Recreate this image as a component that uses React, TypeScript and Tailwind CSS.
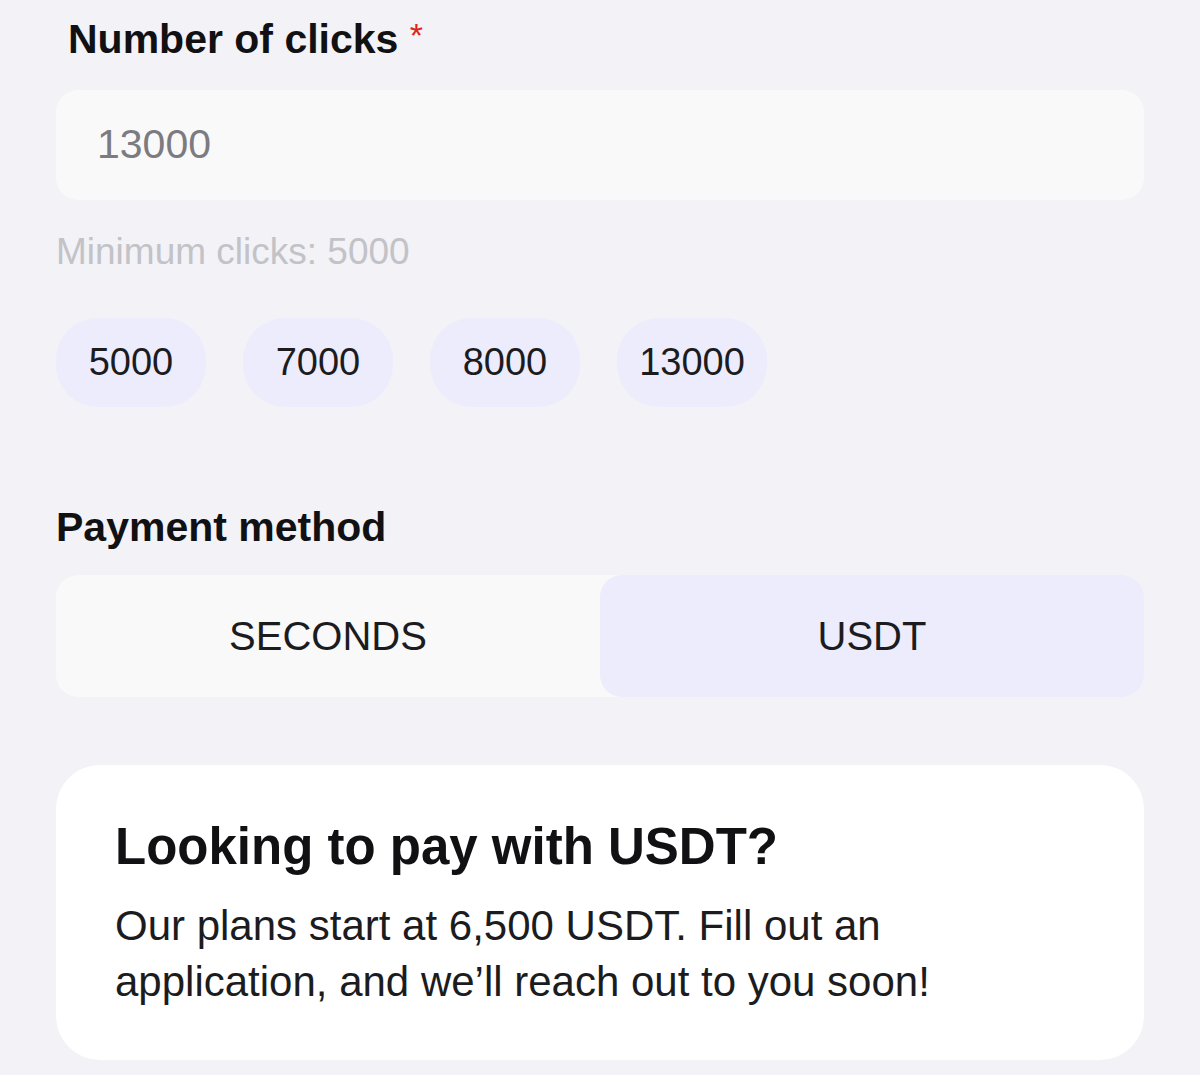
import React, { useState } from "react";

const presets = [5000, 7000, 8000, 13000];

export default function App() {
  const [clicks, setClicks] = useState("13000");
  const [method, setMethod] = useState("USDT");

  return (
    <div
      className="min-h-[1075px] bg-[#f2f2f7] px-[56px] pt-[15px] text-[#111113]"
      style={{ fontFamily: '"Liberation Sans", Arial, sans-serif' }}
    >
      {/* Clicks */}
      <label htmlFor="clicks" className="ml-3 block h-[48px] text-[41px] leading-[48px] font-bold">
        Number of clicks{" "}
        <span className="relative -top-[6px] text-[34px] leading-none font-normal text-[#e0231b]">*</span>
      </label>

      <div className="mt-[27px] flex h-[110px] items-center rounded-[22px] bg-[#f9f9f9] pl-[41px]">
        <input
          id="clicks"
          value={clicks}
          onChange={(e) => setClicks(e.target.value)}
          className="w-full bg-transparent text-[41px] text-[#7b7b81] outline-none"
        />
      </div>

      <p className="mt-[32px] text-[37px] leading-[40px] text-[#c2c2c7]">
        Minimum clicks: 5000
      </p>

      <div className="mt-[46px] flex gap-[37px]">
        {presets.map((p) => (
          <button
            key={p}
            onClick={() => setClicks(String(p))}
            className="flex h-[89px] w-[150px] items-center justify-center rounded-[42px] bg-[#ececfc] text-[38px] text-[#1c1c1e]"
          >
            {p}
          </button>
        ))}
      </div>

      {/* Payment method */}
      <h3 className="mt-[96px] text-[41px] leading-[48px] font-bold">Payment method</h3>

      <div className="mt-[24px] flex h-[122px] rounded-[22px] bg-[#f9f9f9]">
        {["SECONDS", "USDT"].map((m) => (
          <button
            key={m}
            onClick={() => setMethod(m)}
            className={`flex flex-1 items-center justify-center rounded-[22px] text-[40px] text-[#1c1c1e] ${
              method === m ? "bg-[#ececfc]" : ""
            }`}
          >
            {m}
          </button>
        ))}
      </div>

      {/* USDT info */}
      <div className="mt-[68px] rounded-[44px] bg-white px-[59px] pt-[52px] pb-[50px]">
        <h2 className="text-[51px] leading-[60px] font-bold">Looking to pay with USDT?</h2>
        <p className="mt-[21px] text-[42px] leading-[56px] text-[#1c1c1e]">
          Our plans start at 6,500 USDT. Fill out an
          <br />
          application, and we’ll reach out to you soon!
        </p>
      </div>
    </div>
  );
}
